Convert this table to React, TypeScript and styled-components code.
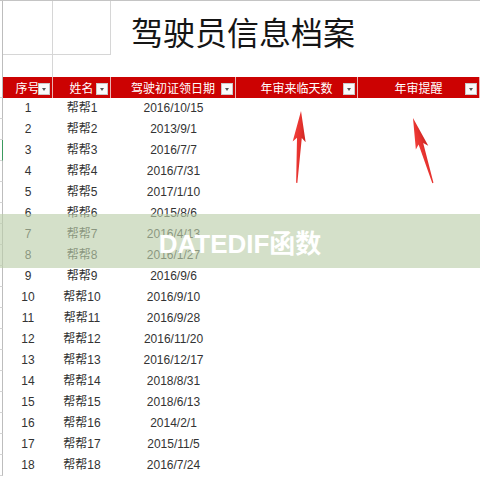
import React from "react";
import styled, { createGlobalStyle } from "styled-components";

const COLS = "3px 50px 58px 125px 122px 1fr";

const Global = createGlobalStyle`
  html, body { margin: 0; padding: 0; background: #fff; }
  body { width: 480px; height: 480px; overflow: hidden; }
`;

const Page = styled.div`
  position: relative;
  width: 480px;
  height: 480px;
  overflow: hidden;
  background: #fff;
  border-top: 1px solid #c4c4c4;
  box-sizing: border-box;
  font-family: "Liberation Sans", "Noto Sans CJK SC", sans-serif;
`;

const TitleBand = styled.div`
  display: grid;
  grid-template-columns: ${COLS};
  grid-template-rows: 54px 22px;
`;

const Gutter = styled.div<{ $rows?: string; $selected?: boolean; $tick?: boolean }>`
  grid-row: ${(p) => p.$rows || "auto"};
  box-sizing: border-box;
  border-right: 1px solid ${(p) => (p.$selected ? "#3c9a5f" : "#bdbdbd")};
  border-bottom: ${(p) => (p.$tick ? "1px solid #d4d4d4" : "none")};
`;

const GridCell = styled.div<{ $right?: boolean; $bottom?: boolean }>`
  box-sizing: border-box;
  border-right: ${(p) => (p.$right ? "1px solid #d6d6d6" : "none")};
  border-bottom: ${(p) => (p.$bottom ? "1px solid #d6d6d6" : "none")};
`;

const Title = styled.h1`
  grid-column: 4 / -1;
  grid-row: 1 / 3;
  margin: 0;
  padding: 7px 0 0 20px;
  font-family: "Noto Sans CJK SC", sans-serif;
  font-weight: 400;
  font-size: 32px;
  line-height: 46px;
  color: #151515;
  letter-spacing: 0;
`;

const HeaderRow = styled.div`
  display: grid;
  grid-template-columns: ${COLS};
  height: 21px;
`;

const HeaderCell = styled.div`
  position: relative;
  box-sizing: border-box;
  background: #cc0202;
  border-right: 1px solid #eab3b3;
  color: #fff;
  font-family: "Noto Sans CJK SC", sans-serif;
  font-size: 12px;
  line-height: 21px;
  text-align: center;
  white-space: nowrap;
`;

const FilterButton = styled.span`
  position: absolute;
  right: 2px;
  top: 6px;
  width: 12px;
  height: 12px;
  box-sizing: border-box;
  background: #fafafa;
  border: 1px solid #c9c9c9;
  &::after {
    content: "";
    position: absolute;
    left: 3px;
    top: 4px;
    border-left: 2.5px solid transparent;
    border-right: 2.5px solid transparent;
    border-top: 3px solid #555;
  }
`;

const DataRow = styled.div`
  display: grid;
  grid-template-columns: ${COLS};
  height: 21px;
`;

const DataCell = styled.div`
  font-size: 12px;
  line-height: 21px;
  color: #333;
  text-align: center;
  white-space: nowrap;
`;

const ArrowLayer = styled.svg`
  position: absolute;
  left: 0;
  top: 0;
  pointer-events: none;
`;

const Banner = styled.div`
  position: absolute;
  left: 0;
  right: 0;
  top: 213px;
  height: 54px;
  background: rgba(188, 207, 170, 0.64);
  display: flex;
  align-items: center;
  justify-content: center;
`;

const BannerText = styled.span`
  font-family: "Liberation Sans", "Noto Sans CJK SC", sans-serif;
  font-weight: 700;
  font-size: 26px;
  color: #fff;
  letter-spacing: 0;
`;

const rows: [number, string, string][] = [
  [1, "帮帮1", "2016/10/15"],
  [2, "帮帮2", "2013/9/1"],
  [3, "帮帮3", "2016/7/7"],
  [4, "帮帮4", "2016/7/31"],
  [5, "帮帮5", "2017/1/10"],
  [6, "帮帮6", "2015/8/6"],
  [7, "帮帮7", "2016/4/13"],
  [8, "帮帮8", "2016/1/27"],
  [9, "帮帮9", "2016/9/6"],
  [10, "帮帮10", "2016/9/10"],
  [11, "帮帮11", "2016/9/28"],
  [12, "帮帮12", "2016/11/20"],
  [13, "帮帮13", "2016/12/17"],
  [14, "帮帮14", "2018/8/31"],
  [15, "帮帮15", "2018/6/13"],
  [16, "帮帮16", "2014/2/1"],
  [17, "帮帮17", "2015/11/5"],
  [18, "帮帮18", "2016/7/24"],
];

const headers = ["序号", "姓名", "驾驶初证领日期", "年审来临天数", "年审提醒"];

function Arrow({ x, y, angle, length }: { x: number; y: number; angle: number; length: number }) {
  const pts = [
    [0, 0],
    [-6.5, 31],
    [-2.4, 27],
    [-0.6, length],
    [0.6, length],
    [2.4, 27],
    [6.5, 31],
  ]
    .map((p) => p.join(","))
    .join(" ");
  return (
    <g transform={`translate(${x} ${y}) rotate(${angle})`}>
      <polygon points={pts} fill="url(#arrowFill)" />
    </g>
  );
}

export default function App() {
  return (
    <>
      <Global />
      <Page>
        <TitleBand>
          <Gutter $rows="1 / 3" />
          <GridCell $right $bottom />
          <GridCell $right $bottom />
          <Title>驾驶员信息档案</Title>
          <GridCell $right />
          <GridCell />
        </TitleBand>
        <HeaderRow>
          <Gutter $tick />
          {headers.map((h) => (
            <HeaderCell key={h}>
              {h}
              <FilterButton />
            </HeaderCell>
          ))}
        </HeaderRow>
        {rows.map(([n, name, date]) => (
          <DataRow key={n}>
            <Gutter $tick $selected={n === 3} />
            <DataCell>{n}</DataCell>
            <DataCell>{name}</DataCell>
            <DataCell>{date}</DataCell>
            <DataCell />
            <DataCell />
          </DataRow>
        ))}
        <ArrowLayer width="480" height="480" viewBox="0 0 480 480">
          <defs>
            <linearGradient id="arrowFill" x1="0" y1="0" x2="1" y2="0">
              <stop offset="0" stopColor="#f0413c" />
              <stop offset="0.5" stopColor="#e8332f" />
              <stop offset="1" stopColor="#c92420" />
            </linearGradient>
          </defs>
          <Arrow x={301} y={110} angle={3.4} length={72} />
          <Arrow x={413} y={117} angle={-17} length={68} />
        </ArrowLayer>
        <Banner>
          <BannerText>DATEDIF函数</BannerText>
        </Banner>
      </Page>
    </>
  );
}
